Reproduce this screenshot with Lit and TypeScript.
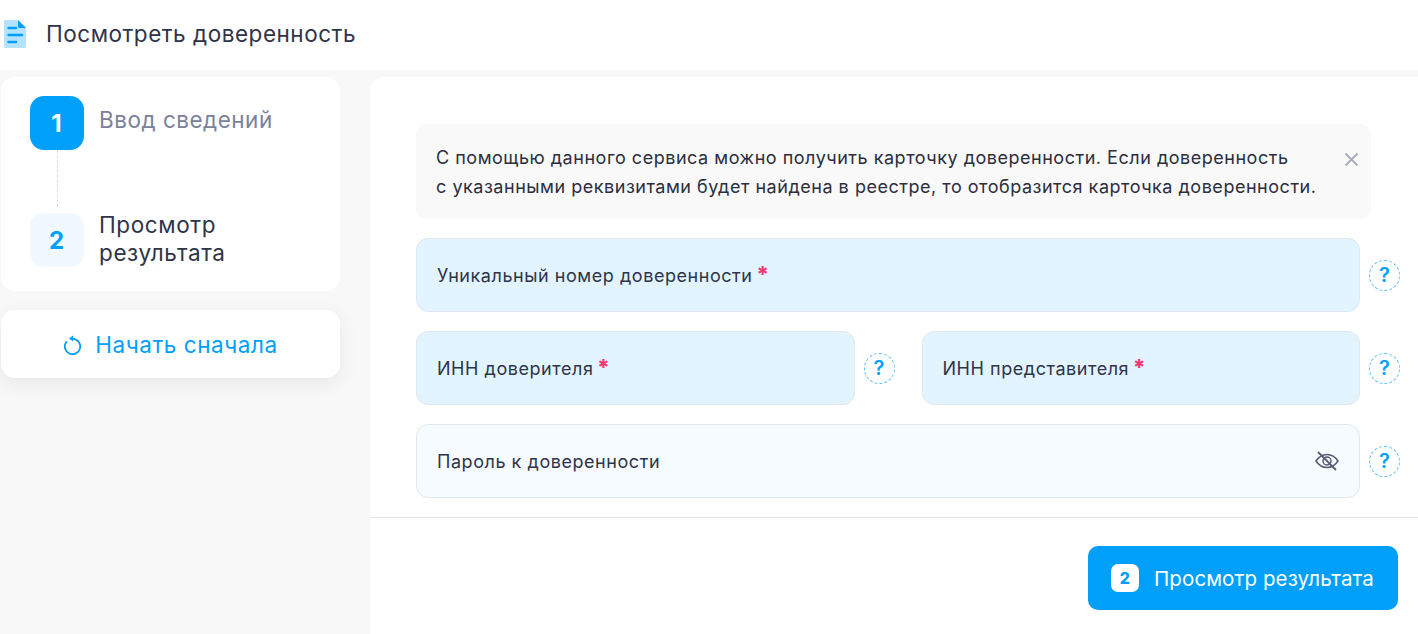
import { LitElement, html, css } from "lit";
import { customElement } from "lit/decorators.js";

const help = html`<span class="help">?</span>`;

@customElement("app-root")
export class AppRoot extends LitElement {
  static styles = css`
    :host { display: block; width: 1418px; height: 634px; overflow: hidden; background: #f8f8f8; font-family: Inter, "Noto Sans", sans-serif; color: #2f3449; }
    * { box-sizing: border-box; }
    .top { height: 70px; background: #fff; display: flex; align-items: center; padding: 0 0 3px 4px; gap: 20px; }
    .top svg { display: block; margin-top: 1px; }
    .top h1 { margin: 0; font-size: 22.5px; font-weight: 400; line-height: 30px; letter-spacing: 0.52px; }
    .body { display: flex; padding: 7px 0 0 1px; gap: 30px; }
    .side { width: 339px; display: flex; flex-direction: column; gap: 19px; flex: none; }
    .card { background: #fff; border-radius: 14px; }
    .steps { height: 214px; padding: 19px 29px; display: flex; flex-direction: column; }
    .step { display: flex; gap: 15px; }
    .num { width: 54px; height: 54px; border-radius: 14px; display: flex; align-items: center; justify-content: center; font-size: 24px; font-weight: 700; flex: none; padding-right: 1px; }
    .num.on { background: #009ffa; color: #fff; }
    .num.off { background: #f0f9ff; color: #009ffa; }
    .lab { font-size: 22.5px; line-height: 28px; padding-top: 10px; letter-spacing: 0.5px; }
    .lab.gray { color: #7b819a; }
    .lab.dark { padding-top: 0; margin-top: -2px; letter-spacing: 0.6px; }
    .line { height: 57px; margin: 0 0 6px 27px; border-left: 1px dashed #dcdcdc; flex: none; }
    .restart { height: 68px; display: flex; align-items: center; justify-content: center; gap: 12px; color: #009ffa; font-size: 22.5px; letter-spacing: 0.55px; box-shadow: 0 6px 20px rgba(0, 0, 0, 0.07); }
    .main { flex: 1; height: 557px; background: #fff; border-radius: 14px 0 0 0; padding-top: 47px; display: flex; flex-direction: column; }
    .form { padding: 0 18px 0 46px; display: flex; flex-direction: column; gap: 19px; }
    .alert { width: 955px; height: 95px; background: #f9f9f9; border-radius: 10px; padding: 19px 20px; font-size: 18px; line-height: 29px; color: #2b2e3d; position: relative; white-space: nowrap; letter-spacing: 0.52px; }
    .close { position: absolute; left: 928px; top: 28px; display: block; }
    .row { display: flex; align-items: center; gap: 9px; }
    .pair { display: flex; gap: 27px; }
    .row.half { flex: 1 1 0; }
    .row.first { flex: 0 0 478.500px; }
    .field { flex: 1; height: 74px; border-radius: 12px; border: 1px solid #dfe7f1; background: #e2f4ff; display: flex; align-items: center; justify-content: space-between; padding: 0 20px 2px; font-size: 18px; letter-spacing: 0.55px; min-width: 0; }
    .field.pale { background: #f6fbff; padding-bottom: 0; }
    .star { color: #f0386e; font-weight: 800; font-size: 22px; line-height: 1; margin-left: -2px; letter-spacing: 0; }
    .help { width: 31px; height: 31px; flex: none; border-radius: 50%; border: 1.500px dashed #5cc0fb; color: #009ffa; font-size: 20px; font-weight: 600; display: flex; align-items: center; justify-content: center; }
    .rule { height: 1px; background: #e5e5e8; margin-top: 19px; flex: none; }
    .foot { display: flex; justify-content: flex-end; padding: 28px 20px 0 0; }
    .go { width: 310px; height: 64px; background: #009ffa; color: #fff; border-radius: 10px; display: flex; align-items: center; padding-left: 23px; gap: 15px; font-size: 20.500px; letter-spacing: 0.1px; }
    .go b { width: 28px; height: 28px; background: #fff; color: #009ffa; border-radius: 7px; display: flex; align-items: center; justify-content: center; font-size: 16px; font-weight: 800; }
  `;

  render() {
    return html`
      <div class="top">
        <svg width="22" height="28" viewBox="0 0 22 28">
          <path d="M1.500 0H14L22 8V26.500a1.500 1.500 0 0 1-1.500 1.500H1.500A1.500 1.500 0 0 1 0 26.500V1.500A1.500 1.500 0 0 1 1.500 0Z" fill="#b5e2fe"/>
          <path d="M14 0L22 8H15.500A1.500 1.500 0 0 1 14 6.500Z" fill="#009ffa"/>
          <path d="M4.500 8H12M4.500 15H18M4.500 22H12" stroke="#009ffa" stroke-width="2.500" stroke-linecap="round"/>
        </svg>
        <h1>Посмотреть доверенность</h1>
      </div>
      <div class="body">
        <div class="side">
          <div class="card steps">
            <div class="step"><div class="num on">1</div><div class="lab gray">Ввод сведений</div></div>
            <div class="line"></div>
            <div class="step"><div class="num off">2</div><div class="lab dark">Просмотр<br />результата</div></div>
          </div>
          <div class="card restart">
            <svg width="20" height="22" viewBox="0 0 20 22" fill="none">
              <path d="M10 5.800A7.700 7.700 0 1 1 3.300 9" stroke="#009ffa" stroke-width="1.800" stroke-linecap="round"/>
              <path d="M10 2.500L6 5.500L10 8.500Z" fill="#009ffa"/>
            </svg>
            <span>Начать сначала</span>
          </div>
        </div>
        <div class="main">
          <div class="form">
            <div class="alert">
              С помощью данного сервиса можно получить карточку доверенности. Если доверенность<br />
              с указанными реквизитами будет найдена в реестре, то отобразится карточка доверенности.
              <svg class="close" width="15" height="15" viewBox="0 0 15 15"><path d="M1.500 1.500L13.500 13.500M13.500 1.500L1.500 13.500" stroke="#a9adbb" stroke-width="1.800"/></svg>
            </div>
            <div class="row"><div class="field"><span>Уникальный номер доверенности <span class="star">*</span></span></div>${help}</div>
            <div class="pair">
              <div class="row half first"><div class="field"><span>ИНН доверителя <span class="star">*</span></span></div>${help}</div>
              <div class="row half"><div class="field"><span>ИНН представителя <span class="star">*</span></span></div>${help}</div>
            </div>
            <div class="row"><div class="field pale"><span>Пароль к доверенности</span>
              <svg width="24" height="20" viewBox="0 0 24 20" fill="none" stroke="#555b73" stroke-width="1.500">
                <path d="M1 10C4 5.500 8 3.500 12 3.500S20 5.500 23 10C20 14.500 16 16.500 12 16.500S4 14.500 1 10Z"/>
                <circle cx="12" cy="10" r="4"/>
                <path d="M3 1L21 19" stroke-width="1.800"/>
              </svg>
            </div>${help}</div>
          </div>
          <div class="rule"></div>
          <div class="foot"><div class="go"><b>2</b><span>Просмотр результата</span></div></div>
        </div>
      </div>
    `;
  }
}
